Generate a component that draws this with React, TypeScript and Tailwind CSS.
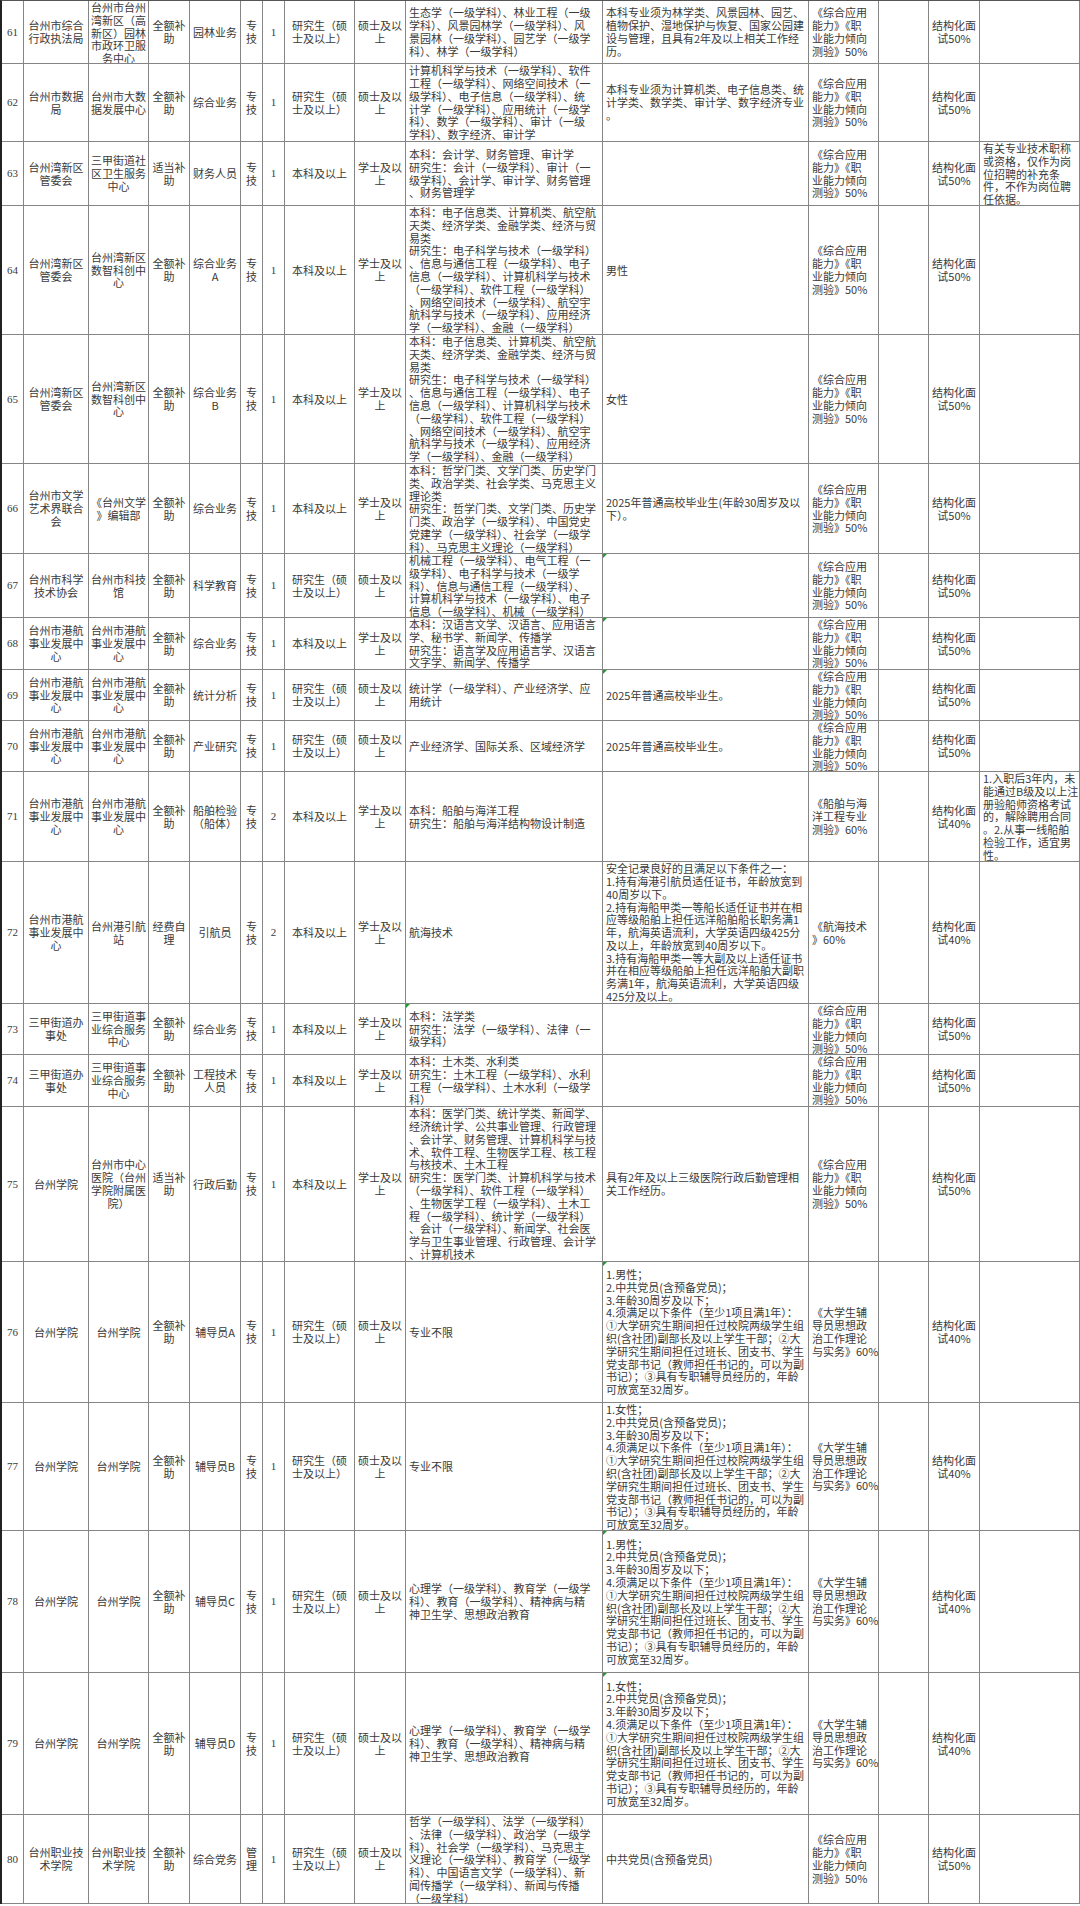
import React from "react";

type Row = {
  h: string;
  no: string;
  c2: string[];
  c3: string[];
  c4: string[];
  c5: string[];
  c6: string[];
  c7: string;
  c8: string[];
  c9: string[];
  c10: string[];
  c11: string[];
  c12: string[];
  c14: string[];
  c15: string[];
  m10?: boolean;
  m11?: boolean;
};

const FULL = ["全额补", "助"];
const ZJ = ["专", "技"];
const MASTER = ["研究生（硕", "士及以上）"];
const MDEG = ["硕士及以", "上"];
const BK = ["本科及以上"];
const BDEG = ["学士及以", "上"];
const EXAM = ["《综合应用", "能力》《职", "业能力倾向", "测验》50%"];
const FDY = ["《大学生辅", "导员思想政", "治工作理论", "与实务》60%"];
const I50 = ["结构化面", "试50%"];
const I40 = ["结构化面", "试40%"];
const GH = ["台州市港航", "事业发展中", "心"];

const ELEC = [
  "本科：电子信息类、计算机类、航空航",
  "天类、经济学类、金融学类、经济与贸",
  "易类",
  "研究生：电子科学与技术（一级学科）",
  "、信息与通信工程（一级学科）、电子",
  "信息（一级学科）、计算机科学与技术",
  "（一级学科）、软件工程（一级学科）",
  "、网络空间技术（一级学科）、航空宇",
  "航科学与技术（一级学科）、应用经济",
  "学（一级学科）、金融（一级学科）",
];

const PSY = [
  "心理学（一级学科）、教育学（一级学",
  "科）、教育（一级学科）、精神病与精",
  "神卫生学、思想政治教育",
];

const cond = (g: string) => [
  `1.${g}；`,
  "2.中共党员(含预备党员)；",
  "3.年龄30周岁及以下；",
  "4.须满足以下条件（至少1项且满1年）：",
  "①大学研究生期间担任过校院两级学生组",
  "织(含社团)副部长及以上学生干部；②大",
  "学研究生期间担任过班长、团支书、学生",
  "党支部书记（教师担任书记的，可以为副",
  "书记）；③具有专职辅导员经历的，年龄",
  "可放宽至32周岁。",
];

const rows: Row[] = [
  {
    h: "h-[63px]",
    no: "61",
    c2: ["台州市综合", "行政执法局"],
    c3: ["台州市台州", "湾新区（高", "新区）园林", "市政环卫服", "务中心"],
    c4: FULL,
    c5: ["园林业务"],
    c6: ZJ,
    c7: "1",
    c8: MASTER,
    c9: MDEG,
    c10: [
      "生态学（一级学科）、林业工程（一级",
      "学科）、风景园林学（一级学科）、风",
      "景园林（一级学科）、园艺学（一级学",
      "科）、林学（一级学科）",
    ],
    c11: [
      "本科专业须为林学类、风景园林、园艺、",
      "植物保护、湿地保护与恢复、国家公园建",
      "设与管理，且具有2年及以上相关工作经",
      "历。",
    ],
    c12: EXAM,
    c14: I50,
    c15: [],
  },
  {
    h: "h-[78px]",
    no: "62",
    c2: ["台州市数据", "局"],
    c3: ["台州市大数", "据发展中心"],
    c4: FULL,
    c5: ["综合业务"],
    c6: ZJ,
    c7: "1",
    c8: MASTER,
    c9: MDEG,
    c10: [
      "计算机科学与技术（一级学科）、软件",
      "工程（一级学科）、网络空间技术（一",
      "级学科）、电子信息（一级学科）、统",
      "计学（一级学科）、应用统计（一级学",
      "科）、数学（一级学科）、审计（一级",
      "学科）、数字经济、审计学",
    ],
    c11: [
      "本科专业须为计算机类、电子信息类、统",
      "计学类、数学类、审计学、数字经济专业",
      "。",
    ],
    c12: EXAM,
    c14: I50,
    c15: [],
  },
  {
    h: "h-[64px]",
    no: "63",
    c2: ["台州湾新区", "管委会"],
    c3: ["三甲街道社", "区卫生服务", "中心"],
    c4: ["适当补", "助"],
    c5: ["财务人员"],
    c6: ZJ,
    c7: "1",
    c8: BK,
    c9: BDEG,
    c10: [
      "本科：会计学、财务管理、审计学",
      "研究生：会计（一级学科）、审计（一",
      "级学科）、会计学、审计学、财务管理",
      "、财务管理学",
    ],
    c11: [],
    c12: EXAM,
    c14: I50,
    c15: ["有关专业技术职称", "或资格，仅作为岗", "位招聘的补充条", "件，不作为岗位聘", "任依据。"],
  },
  {
    h: "h-[129px]",
    no: "64",
    c2: ["台州湾新区", "管委会"],
    c3: ["台州湾新区", "数智科创中", "心"],
    c4: FULL,
    c5: ["综合业务", "A"],
    c6: ZJ,
    c7: "1",
    c8: BK,
    c9: BDEG,
    c10: ELEC,
    c11: ["男性"],
    c12: EXAM,
    c14: I50,
    c15: [],
  },
  {
    h: "h-[129px]",
    no: "65",
    c2: ["台州湾新区", "管委会"],
    c3: ["台州湾新区", "数智科创中", "心"],
    c4: FULL,
    c5: ["综合业务", "B"],
    c6: ZJ,
    c7: "1",
    c8: BK,
    c9: BDEG,
    c10: ELEC,
    c11: ["女性"],
    c12: EXAM,
    c14: I50,
    c15: [],
  },
  {
    h: "h-[90px]",
    no: "66",
    c2: ["台州市文学", "艺术界联合", "会"],
    c3: ["《台州文学", "》编辑部"],
    c4: FULL,
    c5: ["综合业务"],
    c6: ZJ,
    c7: "1",
    c8: BK,
    c9: BDEG,
    c10: [
      "本科：哲学门类、文学门类、历史学门",
      "类、政治学类、社会学类、马克思主义",
      "理论类",
      "研究生：哲学门类、文学门类、历史学",
      "门类、政治学（一级学科）、中国党史",
      "党建学（一级学科）、社会学（一级学",
      "科）、马克思主义理论（一级学科）",
    ],
    c11: ["2025年普通高校毕业生(年龄30周岁及以", "下）。"],
    c12: EXAM,
    c14: I50,
    c15: [],
  },
  {
    h: "h-[64px]",
    no: "67",
    c2: ["台州市科学", "技术协会"],
    c3: ["台州市科技", "馆"],
    c4: FULL,
    c5: ["科学教育"],
    c6: ZJ,
    c7: "1",
    c8: MASTER,
    c9: MDEG,
    c10: [
      "机械工程（一级学科）、电气工程（一",
      "级学科）、电子科学与技术（一级学",
      "科）、信息与通信工程（一级学科）、",
      "计算机科学与技术（一级学科）、电子",
      "信息（一级学科）、机械（一级学科）",
    ],
    c11: [],
    c12: EXAM,
    c14: I50,
    c15: [],
    m11: true,
  },
  {
    h: "h-[52px]",
    no: "68",
    c2: GH,
    c3: GH,
    c4: FULL,
    c5: ["综合业务"],
    c6: ZJ,
    c7: "1",
    c8: BK,
    c9: BDEG,
    c10: [
      "本科：汉语言文学、汉语言、应用语言",
      "学、秘书学、新闻学、传播学",
      "研究生：语言学及应用语言学、汉语言",
      "文字学、新闻学、传播学",
    ],
    c11: [],
    c12: EXAM,
    c14: I50,
    c15: [],
    m11: true,
  },
  {
    h: "h-[51px]",
    no: "69",
    c2: GH,
    c3: GH,
    c4: FULL,
    c5: ["统计分析"],
    c6: ZJ,
    c7: "1",
    c8: MASTER,
    c9: MDEG,
    c10: ["统计学（一级学科）、产业经济学、应", "用统计"],
    c11: ["2025年普通高校毕业生。"],
    c12: EXAM,
    c14: I50,
    c15: [],
    m11: true,
  },
  {
    h: "h-[51px]",
    no: "70",
    c2: GH,
    c3: GH,
    c4: FULL,
    c5: ["产业研究"],
    c6: ZJ,
    c7: "1",
    c8: MASTER,
    c9: MDEG,
    c10: ["产业经济学、国际关系、区域经济学"],
    c11: ["2025年普通高校毕业生。"],
    c12: EXAM,
    c14: I50,
    c15: [],
  },
  {
    h: "h-[90px]",
    no: "71",
    c2: GH,
    c3: GH,
    c4: FULL,
    c5: ["船舶检验", "（船体）"],
    c6: ZJ,
    c7: "2",
    c8: BK,
    c9: BDEG,
    c10: ["本科：船舶与海洋工程", "研究生：船舶与海洋结构物设计制造"],
    c11: [],
    c12: ["《船舶与海", "洋工程专业", "测验》60%"],
    c14: I40,
    c15: [
      "1.入职后3年内，未",
      "能通过B级及以上注",
      "册验船师资格考试",
      "的，解除聘用合同",
      "。2.从事一线船舶",
      "检验工作，适宜男",
      "性。",
    ],
  },
  {
    h: "h-[142px]",
    no: "72",
    c2: GH,
    c3: ["台州港引航", "站"],
    c4: ["经费自", "理"],
    c5: ["引航员"],
    c6: ZJ,
    c7: "2",
    c8: BK,
    c9: BDEG,
    c10: ["航海技术"],
    c11: [
      "安全记录良好的且满足以下条件之一：",
      "1.持有海港引航员适任证书，年龄放宽到",
      "40周岁以下。",
      "2.持有海船甲类一等船长适任证书并在相",
      "应等级船舶上担任远洋船舶船长职务满1",
      "年，航海英语流利，大学英语四级425分",
      "及以上，年龄放宽到40周岁以下。",
      "3.持有海船甲类一等大副及以上适任证书",
      "并在相应等级船舶上担任远洋船舶大副职",
      "务满1年，航海英语流利，大学英语四级",
      "425分及以上。",
    ],
    c12: ["《航海技术", "》60%"],
    c14: I40,
    c15: [],
  },
  {
    h: "h-[51px]",
    no: "73",
    c2: ["三甲街道办", "事处"],
    c3: ["三甲街道事", "业综合服务", "中心"],
    c4: FULL,
    c5: ["综合业务"],
    c6: ZJ,
    c7: "1",
    c8: BK,
    c9: BDEG,
    c10: ["本科：法学类", "研究生：法学（一级学科）、法律（一", "级学科）"],
    c11: [],
    c12: EXAM,
    c14: I50,
    c15: [],
    m10: true,
  },
  {
    h: "h-[52px]",
    no: "74",
    c2: ["三甲街道办", "事处"],
    c3: ["三甲街道事", "业综合服务", "中心"],
    c4: FULL,
    c5: ["工程技术", "人员"],
    c6: ZJ,
    c7: "1",
    c8: BK,
    c9: BDEG,
    c10: [
      "本科：土木类、水利类",
      "研究生：土木工程（一级学科）、水利",
      "工程（一级学科）、土木水利（一级学",
      "科）",
    ],
    c11: [],
    c12: EXAM,
    c14: I50,
    c15: [],
  },
  {
    h: "h-[155px]",
    no: "75",
    c2: ["台州学院"],
    c3: ["台州市中心", "医院（台州", "学院附属医", "院）"],
    c4: ["适当补", "助"],
    c5: ["行政后勤"],
    c6: ZJ,
    c7: "1",
    c8: BK,
    c9: BDEG,
    c10: [
      "本科：医学门类、统计学类、新闻学、",
      "经济统计学、公共事业管理、行政管理",
      "、会计学、财务管理、计算机科学与技",
      "术、软件工程、生物医学工程、核工程",
      "与核技术、土木工程",
      "研究生：医学门类、计算机科学与技术",
      "（一级学科）、软件工程（一级学科）",
      "、生物医学工程（一级学科）、土木工",
      "程（一级学科）、统计学（一级学科）",
      "、会计（一级学科）、新闻学、社会医",
      "学与卫生事业管理、行政管理、会计学",
      "、计算机技术",
    ],
    c11: ["具有2年及以上三级医院行政后勤管理相", "关工作经历。"],
    c12: EXAM,
    c14: I50,
    c15: [],
  },
  {
    h: "h-[141px]",
    no: "76",
    c2: ["台州学院"],
    c3: ["台州学院"],
    c4: FULL,
    c5: ["辅导员A"],
    c6: ZJ,
    c7: "1",
    c8: MASTER,
    c9: MDEG,
    c10: ["专业不限"],
    c11: cond("男性"),
    c12: FDY,
    c14: I40,
    c15: [],
    m11: true,
  },
  {
    h: "h-[128px]",
    no: "77",
    c2: ["台州学院"],
    c3: ["台州学院"],
    c4: FULL,
    c5: ["辅导员B"],
    c6: ZJ,
    c7: "1",
    c8: MASTER,
    c9: MDEG,
    c10: ["专业不限"],
    c11: cond("女性"),
    c12: FDY,
    c14: I40,
    c15: [],
  },
  {
    h: "h-[142px]",
    no: "78",
    c2: ["台州学院"],
    c3: ["台州学院"],
    c4: FULL,
    c5: ["辅导员C"],
    c6: ZJ,
    c7: "1",
    c8: MASTER,
    c9: MDEG,
    c10: PSY,
    c11: cond("男性"),
    c12: FDY,
    c14: I40,
    c15: [],
    m11: true,
  },
  {
    h: "h-[142px]",
    no: "79",
    c2: ["台州学院"],
    c3: ["台州学院"],
    c4: FULL,
    c5: ["辅导员D"],
    c6: ZJ,
    c7: "1",
    c8: MASTER,
    c9: MDEG,
    c10: PSY,
    c11: cond("女性"),
    c12: FDY,
    c14: I40,
    c15: [],
    m11: true,
  },
  {
    h: "h-[89px]",
    no: "80",
    c2: ["台州职业技", "术学院"],
    c3: ["台州职业技", "术学院"],
    c4: FULL,
    c5: ["综合党务"],
    c6: ["管", "理"],
    c7: "1",
    c8: MASTER,
    c9: MDEG,
    c10: [
      "哲学（一级学科）、法学（一级学科）",
      "、法律（一级学科）、政治学（一级学",
      "科）、社会学（一级学科）、马克思主",
      "义理论（一级学科）、教育学（一级学",
      "科）、中国语言文学（一级学科）、新",
      "闻传播学（一级学科）、新闻与传播",
      "（一级学科）",
    ],
    c11: ["中共党员(含预备党员)"],
    c12: EXAM,
    c14: I50,
    c15: [],
  },
];

function Cell({
  lines,
  left,
  serif,
  mark,
}: {
  lines: string[];
  left?: boolean;
  serif?: boolean;
  mark?: boolean;
}) {
  return (
    <div
      className={
        "relative flex flex-col [justify-content:safe_center] overflow-hidden border-r border-b border-[#858585] " +
        (left ? "items-start text-left pl-[3px]" : "items-center text-center") +
        (serif ? " font-['Liberation_Serif','Noto_Sans_CJK_SC',serif]" : "")
      }
    >
      {mark && (
        <div className="absolute left-0 top-0 h-0 w-0 border-t-[4px] border-r-[4px] border-t-[#1f9a2e] border-r-transparent" />
      )}
      {lines.map((l, i) => (
        <div key={i} className="whitespace-nowrap">
          {l}
        </div>
      ))}
    </div>
  );
}

export default function App() {
  return (
    <div className="w-[1080px] min-h-[1906px] bg-white">
      <div className="w-[1080px] border-t border-l-2 border-t-[#555] border-l-[#222] text-[11px] leading-[12.8px] text-[#3a3a3a] font-['Noto_Sans_CJK_SC','Noto_Sans',sans-serif]">
        {rows.map((r) => (
          <div
            key={r.no}
            className={
              "grid grid-cols-[22px_65px_60px_41px_51px_22px_22px_70px_51px_197px_206px_70px_50px_51px_100px] " +
              r.h
            }
          >
            <Cell lines={[r.no]} serif />
            <Cell lines={r.c2} />
            <Cell lines={r.c3} />
            <Cell lines={r.c4} />
            <Cell lines={r.c5} />
            <Cell lines={r.c6} />
            <Cell lines={[r.c7]} serif />
            <Cell lines={r.c8} />
            <Cell lines={r.c9} />
            <Cell lines={r.c10} left mark={r.m10} />
            <Cell lines={r.c11} left mark={r.m11} />
            <Cell lines={r.c12} left />
            <Cell lines={[]} />
            <Cell lines={r.c14} />
            <Cell lines={r.c15} left />
          </div>
        ))}
      </div>
    </div>
  );
}
